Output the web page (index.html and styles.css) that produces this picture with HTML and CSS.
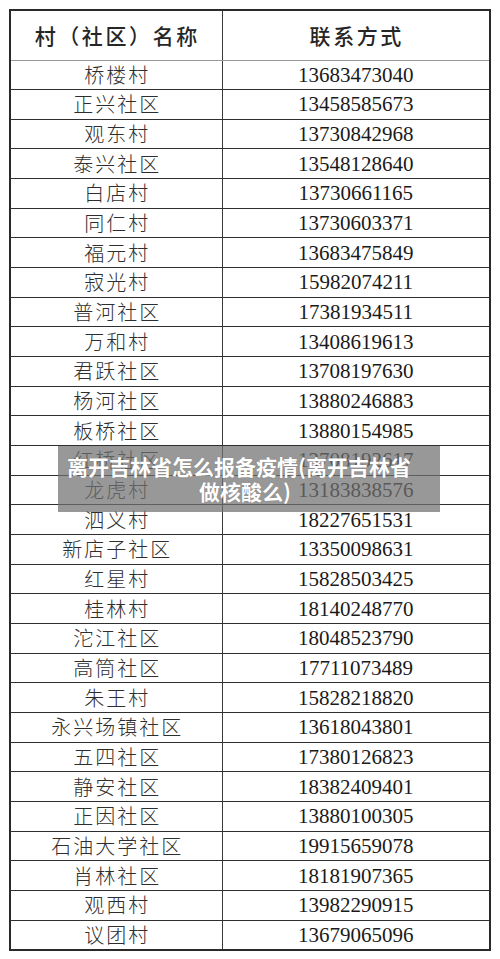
FILE: index.html
```html
<!DOCTYPE html>
<html lang="zh-CN">
<head>
<meta charset="utf-8">
<title>村（社区）联系方式</title>
<link rel="stylesheet" href="styles.css">
</head>
<body>
<div class="page">
  <table class="contacts">
    <colgroup><col class="c-name"><col class="c-phone"></colgroup>
    <thead>
      <tr><th class="h-name">村（社区）名称</th><th class="h-phone">联系方式</th></tr>
    </thead>
    <tbody>
      <tr><td>桥楼村</td><td>13683473040</td></tr>
      <tr><td>正兴社区</td><td>13458585673</td></tr>
      <tr><td>观东村</td><td>13730842968</td></tr>
      <tr><td>泰兴社区</td><td>13548128640</td></tr>
      <tr><td>白店村</td><td>13730661165</td></tr>
      <tr><td>同仁村</td><td>13730603371</td></tr>
      <tr><td>福元村</td><td>13683475849</td></tr>
      <tr><td>寂光村</td><td>15982074211</td></tr>
      <tr><td>普河社区</td><td>17381934511</td></tr>
      <tr><td>万和村</td><td>13408619613</td></tr>
      <tr><td>君跃社区</td><td>13708197630</td></tr>
      <tr><td>杨河社区</td><td>13880246883</td></tr>
      <tr><td>板桥社区</td><td>13880154985</td></tr>
      <tr><td>红桥社区</td><td>13708192617</td></tr>
      <tr><td>龙虎村</td><td>13183838576</td></tr>
      <tr><td>泗义村</td><td>18227651531</td></tr>
      <tr><td>新店子社区</td><td>13350098631</td></tr>
      <tr><td>红星村</td><td>15828503425</td></tr>
      <tr><td>桂林村</td><td>18140248770</td></tr>
      <tr><td>沱江社区</td><td>18048523790</td></tr>
      <tr><td>高筒社区</td><td>17711073489</td></tr>
      <tr><td>朱王村</td><td>15828218820</td></tr>
      <tr><td>永兴场镇社区</td><td>13618043801</td></tr>
      <tr><td>五四社区</td><td>17380126823</td></tr>
      <tr><td>静安社区</td><td>18382409401</td></tr>
      <tr><td>正因社区</td><td>13880100305</td></tr>
      <tr><td>石油大学社区</td><td>19915659078</td></tr>
      <tr><td>肖林社区</td><td>18181907365</td></tr>
      <tr><td>观西村</td><td>13982290915</td></tr>
      <tr><td>议团村</td><td>13679065096</td></tr>
    </tbody>
  </table>
  <div class="caption">
    <span class="caption-line">离开吉林省怎么报备疫情(离开吉林省</span>
    <span class="caption-line caption-line-2">做核酸么)</span>
  </div>
</div>
</body>
</html>
```

FILE: styles.css
```css
html, body {
  margin: 0;
  padding: 0;
  background: #ffffff;
}

.page {
  position: relative;
  width: 500px;
  height: 959px;
  padding: 9px 0 0 9px;
  box-sizing: border-box;
}

.contacts {
  border-collapse: collapse;
  table-layout: fixed;
  width: 482px;
  border: 2px solid #2a2a2a;
  color: #1e1e1e;
}

.c-name { width: 212px; }

.contacts th,
.contacts td {
  padding: 0;
  text-align: center;
  vertical-align: middle;
  overflow: hidden;
  white-space: nowrap;
}

.contacts thead tr { height: 50px; }

.contacts th {
  font-family: "Noto Sans CJK SC", sans-serif;
  font-weight: 500;
  font-size: 21px;
  letter-spacing: 2.6px;
  border-bottom: 1px solid #9a9a9a;
  border-right: 1.5px solid #3a3a3a;
  padding-left: 2px;
  color: #262626;
}

.contacts th:last-child { border-right: none; }

.contacts tbody tr { height: 29.67px; }

.contacts td {
  border-bottom: 1.5px solid #2f2f2f;
  border-right: 1.5px solid #3a3a3a;
  line-height: 26px;
}

.contacts td:first-child {
  font-family: "Noto Sans CJK SC", sans-serif;
  font-weight: 300;
  font-size: 20px;
  letter-spacing: 2px;
  padding-left: 2px;
  color: #2e2e2e;
}

.contacts td:last-child {
  font-family: "Liberation Serif", serif;
  font-size: 21px;
  border-right: none;
  color: #1a1a1a;
}

.caption {
  position: absolute;
  left: 58px;
  top: 446px;
  width: 382px;
  height: 66px;
  box-sizing: border-box;
  padding: 8px 20px 8px 0;
  display: flex;
  flex-direction: column;
  align-items: center;
  background: rgba(112, 112, 112, 0.72);
  color: #ffffff;
  font-family: "Noto Sans CJK SC", sans-serif;
  font-weight: 700;
  font-size: 21px;
  line-height: 25px;
  white-space: nowrap;
  text-shadow: 0 0 1px rgba(0, 0, 0, 0.25);
}

.caption-line-2 {
  padding-left: 12px;
}
```
